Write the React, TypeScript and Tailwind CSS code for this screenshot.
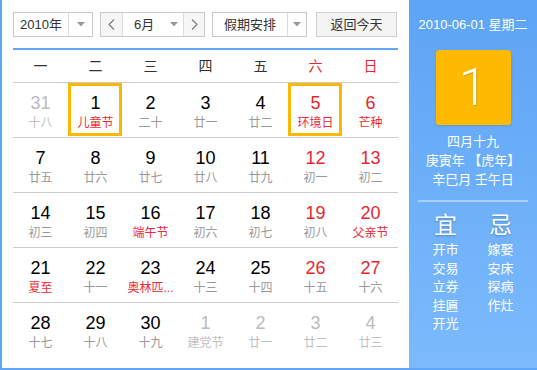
import React from "react";

type Day = {
  d: number;
  l: string;
  other?: boolean;
  fest?: boolean;
  sel?: boolean;
};

const rows: Day[][] = [
  [
    { d: 31, l: "十八", other: true },
    { d: 1, l: "儿童节", fest: true, sel: true },
    { d: 2, l: "二十" },
    { d: 3, l: "廿一" },
    { d: 4, l: "廿二" },
    { d: 5, l: "环境日", fest: true, sel: true },
    { d: 6, l: "芒种", fest: true },
  ],
  [
    { d: 7, l: "廿五" },
    { d: 8, l: "廿六" },
    { d: 9, l: "廿七" },
    { d: 10, l: "廿八" },
    { d: 11, l: "廿九" },
    { d: 12, l: "初一" },
    { d: 13, l: "初二" },
  ],
  [
    { d: 14, l: "初三" },
    { d: 15, l: "初四" },
    { d: 16, l: "端午节", fest: true },
    { d: 17, l: "初六" },
    { d: 18, l: "初七" },
    { d: 19, l: "初八" },
    { d: 20, l: "父亲节", fest: true },
  ],
  [
    { d: 21, l: "夏至", fest: true },
    { d: 22, l: "十一" },
    { d: 23, l: "奥林匹...", fest: true },
    { d: 24, l: "十三" },
    { d: 25, l: "十四" },
    { d: 26, l: "十五" },
    { d: 27, l: "十六" },
  ],
  [
    { d: 28, l: "十七" },
    { d: 29, l: "十八" },
    { d: 30, l: "十九" },
    { d: 1, l: "建党节", other: true },
    { d: 2, l: "廿一", other: true },
    { d: 3, l: "廿二", other: true },
    { d: 4, l: "廿三", other: true },
  ],
];

const weekdays = ["一", "二", "三", "四", "五", "六", "日"];

function Caret() {
  return (
    <svg width="8" height="5" viewBox="0 0 8 5">
      <path d="M0 0h8L4 4.5z" fill="#999" />
    </svg>
  );
}

function Chevron({ dir }: { dir: "l" | "r" }) {
  return (
    <svg width="7" height="11" viewBox="0 0 7 11">
      <polyline
        points={dir === "l" ? "6,0.5 1,5.5 6,10.5" : "1,0.5 6,5.5 1,10.5"}
        fill="none"
        stroke="#777"
        strokeWidth="1.1"
      />
    </svg>
  );
}

function Cell({ day, col }: { day: Day; col: number }) {
  const weekend = col >= 5;
  let numColor = "text-black";
  if (day.other) numColor = "text-[#bbbbbb]";
  else if (weekend) numColor = "text-[#e8262e]";
  let lunColor = "text-[#999999]";
  if (day.other) lunColor = "text-[#c0c0c0]";
  else if (day.fest) lunColor = "text-[#ee2a33]";

  return (
    <div className="relative flex w-[55px] flex-col items-center pt-[10px]">
      {day.sel && (
        <div className="absolute left-0 top-0 h-[53px] w-[54px] border-[3px] border-[#fbb800]" />
      )}
      <div className={`text-[18px] leading-[20px] ${numColor}`}>{day.d}</div>
      <div className={`text-[12px] leading-[20px] ${lunColor}`}>{day.l}</div>
    </div>
  );
}

export default function App() {
  return (
    <div
      className="flex h-[370px] w-[537px] border-b-2 border-l-2 border-[#5fa6f6] bg-white"
      style={{ fontFamily: '"Liberation Sans", Arial, "Noto Sans CJK SC", sans-serif' }}
    >
      {/* left: calendar */}
      <div className="w-[407px] pl-[11px] pt-[12px]">
        <div className="flex h-[25px] text-[13px] text-[#333]">
          <div className="flex w-[80px] border border-[#c9c9c9] bg-white">
            <div className="flex w-[55px] items-center justify-center border-r border-[#dcdcdc]">2010年</div>
            <div className="flex flex-1 items-center justify-center">
              <Caret />
            </div>
          </div>
          <div className="ml-[7px] flex w-[105px] border border-[#c9c9c9] bg-white">
            <div className="flex w-[22px] items-center justify-center border-r border-[#dcdcdc] bg-[#f6f6f6]">
              <Chevron dir="l" />
            </div>
            <div className="flex w-[60px] items-center pl-[11px]">
              <span>6月</span>
              <span className="ml-[16px] flex">
                <Caret />
              </span>
            </div>
            <div className="flex flex-1 items-center justify-center border-l border-[#dcdcdc] bg-[#f6f6f6]">
              <Chevron dir="r" />
            </div>
          </div>
          <div className="ml-[7px] flex w-[95px] border border-[#c9c9c9] bg-white">
            <div className="flex w-[75px] items-center justify-center border-r border-[#dcdcdc]">假期安排</div>
            <div className="flex flex-1 items-center justify-center">
              <Caret />
            </div>
          </div>
          <div className="ml-[9px] flex w-[81px] items-center justify-center border border-[#d0d0d0] bg-[#f4f4f4]">
            返回今天
          </div>
        </div>

        <div className="mt-[11px] h-[2px] w-[385px] bg-[#5fa6f6]" />

        <div className="flex h-[33px] w-[385px] border-b border-[#cccccc] text-[14px]">
          {weekdays.map((w, i) => (
            <div
              key={w}
              className={`flex w-[55px] items-center justify-center ${i >= 5 ? "text-[#e8262e]" : "text-[#333]"}`}
            >
              {w}
            </div>
          ))}
        </div>

        {rows.map((r, ri) => (
          <div
            key={ri}
            className={`flex h-[55px] w-[385px] ${ri < rows.length - 1 ? "border-b border-[#cccccc]" : ""}`}
          >
            {r.map((day, ci) => (
              <Cell key={ci} day={day} col={ci} />
            ))}
          </div>
        ))}
      </div>

      {/* right: detail panel */}
      <div className="flex w-[128px] flex-col items-center bg-gradient-to-b from-[#5da4f5] to-[#7cbafc] pt-[16px] text-white">
        <div className="text-[13px] leading-[18px]">2010-06-01 星期二</div>
        <div className="mt-[16px] flex h-[75px] w-[75px] items-center justify-center rounded-[3px] bg-[#fdba00] font-['Roboto',sans-serif] text-[52px] font-light leading-none shadow-[0_1px_3px_rgba(0,0,0,0.12)] [text-shadow:1px_1px_1px_rgba(0,0,0,0.15)]">
          1
        </div>
        <div className="mt-[7px] text-center text-[13px] leading-[19px]">
          <div>四月十九</div>
          <div>庚寅年 【虎年】</div>
          <div>辛巳月 壬午日</div>
        </div>
        <div className="mt-[11px] h-[2px] w-[110px] bg-[#a9d0fb]" />
        <div className="mt-[9px] flex w-[110px] text-[13px]">
          {[
            { t: "宜", items: ["开市", "交易", "立券", "挂匾", "开光"] },
            { t: "忌", items: ["嫁娶", "安床", "探病", "作灶"] },
          ].map((c) => (
            <div key={c.t} className="flex w-[55px] flex-col items-center">
              <div className="text-[23px] leading-[28px] [text-shadow:0_1px_2px_rgba(0,0,0,0.25)]">{c.t}</div>
              <div className="mt-[2px] flex flex-col leading-[18.5px]">
                {c.items.map((it) => (
                  <div key={it}>{it}</div>
                ))}
              </div>
            </div>
          ))}
        </div>
      </div>
    </div>
  );
}
